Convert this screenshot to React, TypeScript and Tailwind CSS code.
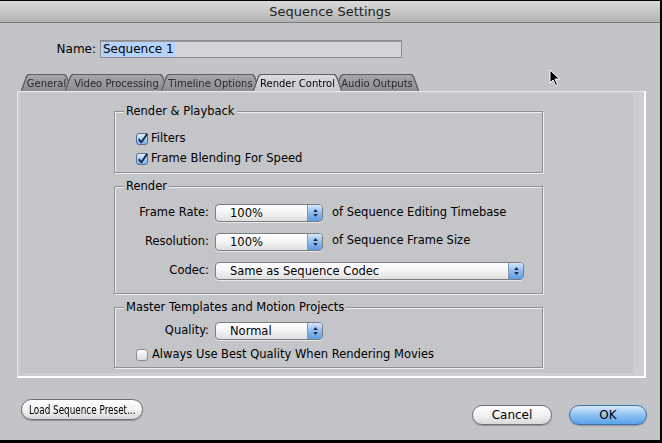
import React from 'react';

const font = { fontFamily: '"DejaVu Sans", "Liberation Sans", sans-serif' };

function Check({ checked }: { checked: boolean }) {
  return (
    <span
      className={`relative w-[12px] h-[12px] rounded-[3px] border shrink-0 ${
        checked
          ? 'border-[#50709a] bg-gradient-to-b from-[#e3f0fd] via-[#a9cdf3] to-[#7fb2ea]'
          : 'border-[#8a8b8f] bg-gradient-to-b from-white to-[#dcdcdc]'
      }`}
    >
      {checked && (
        <svg viewBox="0 0 12 12" className="absolute -left-[1px] -top-[2px] w-[13px] h-[13px]">
          <path d="M2.5 6.5 L5 9.5 L10.5 1.5" fill="none" stroke="#1d2c4a" strokeWidth="1.8" strokeLinejoin="round" />
        </svg>
      )}
    </span>
  );
}

function Popup({ text, width }: { text: string; width: string }) {
  return (
    <div className={`flex h-[18px] ${width} rounded-[4px] border border-[#7c7d81] bg-gradient-to-b from-white via-[#f4f4f4] to-[#dedede] shadow-[0_1px_0_rgba(255,255,255,0.6)] overflow-hidden`}>
      <span className="flex-1 pl-[14px] leading-[16px]">{text}</span>
      <span className="w-[15px] border-l border-[#7e96b8] bg-gradient-to-b from-[#d6e7fa] via-[#8fbbee] to-[#5e9ae0] flex flex-col items-center justify-center gap-[2px]">
        <svg viewBox="0 0 6 4" className="w-[5px] h-[3px]"><path d="M0 4 L3 0 L6 4 Z" fill="#1b2740" /></svg>
        <svg viewBox="0 0 6 4" className="w-[5px] h-[3px]"><path d="M0 0 L3 4 L6 0 Z" fill="#1b2740" /></svg>
      </span>
    </div>
  );
}

function Group({ title, className, children }: { title: string; className: string; children: React.ReactNode }) {
  return (
    <div className={`relative ml-[94px] w-[429px] border border-[#8f9094] shadow-[inset_1px_1px_0_#eeeef0,1px_1px_0_#eeeef0] ${className}`}>
      <span className="absolute left-[9px] -top-[9px] px-[2px] bg-[#c4c5c8] leading-[16px]">{title}</span>
      {children}
    </div>
  );
}

const tabs = ['General', 'Video Processing', 'Timeline Options', 'Render Control', 'Audio Outputs'];
const tabWidths = ['w-[49px]', 'w-[101px]', 'w-[97px]', 'w-[87px]', 'w-[82px]'];

export default function App() {
  return (
    <div className="w-[662px] h-[443px] bg-black text-black text-[11.5px] overflow-hidden" style={font}>
      <div className="relative mt-[1px] mr-[2px] h-[439px] bg-[#c3c4c8] flex flex-col">
        {/* title bar */}
        <div className="h-[22px] bg-gradient-to-b from-[#dadada] to-[#b3b3b3] border-b border-[#7a7a7a] flex items-center justify-center text-[13px] text-[#1e1e1e]">
          Sequence Settings
        </div>

        {/* name row */}
        <div className="flex items-center mt-[17px] h-[18px]">
          <span className="w-[100px] text-right pr-[4px] text-[12px]">Name:</span>
          <div className="w-[302px] h-[18px] bg-[#d4d5d8] border border-[#8b8c90] shadow-[inset_0_1px_0_#9a9b9e] flex items-center pl-[1px]">
            <span className="bg-[#b5d3fb] px-[1px] text-[12px] leading-[15px]">Sequence 1</span>
          </div>
        </div>

        {/* tabs */}
        <div className="flex items-end mt-[16px] ml-[22px] h-[17px]">
          {tabs.map((t, i) => {
            const active = t === 'Render Control';
            return (
              <div
                key={t}
                className={`relative ${i > 0 ? '-ml-[5px]' : ''} [filter:drop-shadow(1px_0_0_#5d5e62)_drop-shadow(-1px_0_0_#5d5e62)_drop-shadow(0_-1px_0_#5d5e62)]`}
                style={{ zIndex: active ? 10 : i }}
              >
                <div
                  className={`${tabWidths[i]} h-[16px] flex items-center justify-center text-[10px] [clip-path:polygon(0_100%,5px_2px,7px_0,calc(100%-7px)_0,calc(100%-5px)_2px,100%_100%)] ${
                    active
                      ? 'bg-gradient-to-b from-[#dcdde0] to-[#c6c7ca] text-black'
                      : 'bg-gradient-to-b from-[#a6a7aa] to-[#8c8d90] text-[#2a2a2a]'
                  }`}
                >
                  {t}
                </div>
              </div>
            );
          })}
        </div>

        {/* panel */}
        <div className="ml-[17px] w-[629px] h-[287px] border-l border-t border-[#e6e6e8] border-r-2 border-r-white border-b-2 border-b-white bg-[#cdcecf] pl-[2px] pt-[1px] pr-[11px] pb-[3px]">
          <div className="h-full bg-[#c4c5c8] pt-[18px] flex flex-col">
            <Group title="Render & Playback" className="h-[62px] pt-[21px] pl-[21px] flex flex-col gap-[8px]">
              <div className="flex items-center gap-[3px] h-[12px]"><Check checked /><span>Filters</span></div>
              <div className="flex items-center gap-[3px] h-[12px]"><Check checked /><span>Frame Blending For Speed</span></div>
            </Group>

            <Group title="Render" className="mt-[13px] h-[108px] pt-[17px] flex flex-col gap-[11px]">
              <div className="flex items-center">
                <span className="w-[100px] text-right pr-[6px]">Frame Rate:</span>
                <Popup text="100%" width="w-[108px]" />
                <span className="ml-[9px]">of Sequence Editing Timebase</span>
              </div>
              <div className="flex items-center">
                <span className="w-[100px] text-right pr-[6px]">Resolution:</span>
                <Popup text="100%" width="w-[108px]" />
                <span className="ml-[9px] -mt-[3px]">of Sequence Frame Size</span>
              </div>
              <div className="flex items-center">
                <span className="w-[100px] text-right pr-[6px]">Codec:</span>
                <Popup text="Same as Sequence Codec" width="w-[309px]" />
              </div>
            </Group>

            <Group title="Master Templates and Motion Projects" className="mt-[13px] h-[61px] pt-[14px] flex flex-col gap-[9px]">
              <div className="flex items-center">
                <span className="w-[100px] text-right pr-[6px]">Quality:</span>
                <Popup text="Normal" width="w-[108px]" />
              </div>
              <div className="flex items-center gap-[4px] pl-[21px] h-[12px]">
                <Check checked={false} />
                <span>Always Use Best Quality When Rendering Movies</span>
              </div>
            </Group>
          </div>
        </div>

        {/* bottom buttons */}
        <div className="flex items-start mt-[21px] px-[21px]">
          <button className="w-[122px] h-[21px] flex items-center justify-center rounded-full border border-[#6e6f73] bg-gradient-to-b from-white via-[#f2f2f2] to-[#d9d9d9] text-[13px] shadow-[0_1px_1px_rgba(0,0,0,0.25)]">
            <span className="inline-block whitespace-nowrap scale-x-[0.68]">Load Sequence Preset...</span>
          </button>
          <div className="flex-1" />
          <button className="mt-[6px] w-[80px] h-[20px] rounded-full border border-[#6e6f73] bg-gradient-to-b from-white via-[#f2f2f2] to-[#d9d9d9] text-[12px] shadow-[0_1px_1px_rgba(0,0,0,0.25)]">
            Cancel
          </button>
          <button className="ml-[17px] -mr-[8px] mt-[6px] w-[78px] h-[20px] rounded-full border border-[#3f6fa8] bg-gradient-to-b from-[#d7eafc] via-[#8ec1f2] to-[#5aa4ec] text-[12px] shadow-[0_1px_1px_rgba(0,0,0,0.25)]">
            OK
          </button>
        </div>

        {/* mouse pointer */}
        <svg viewBox="0 0 12 18" className="absolute left-[549px] top-[68px] w-[12px] h-[18px]">
          <path d="M1 1 L1 14 L4 11 L6.5 16.5 L8.5 15.5 L6 10 L10.5 10 Z" fill="#000" stroke="#fff" strokeWidth="1" />
        </svg>
      </div>
    </div>
  );
}
